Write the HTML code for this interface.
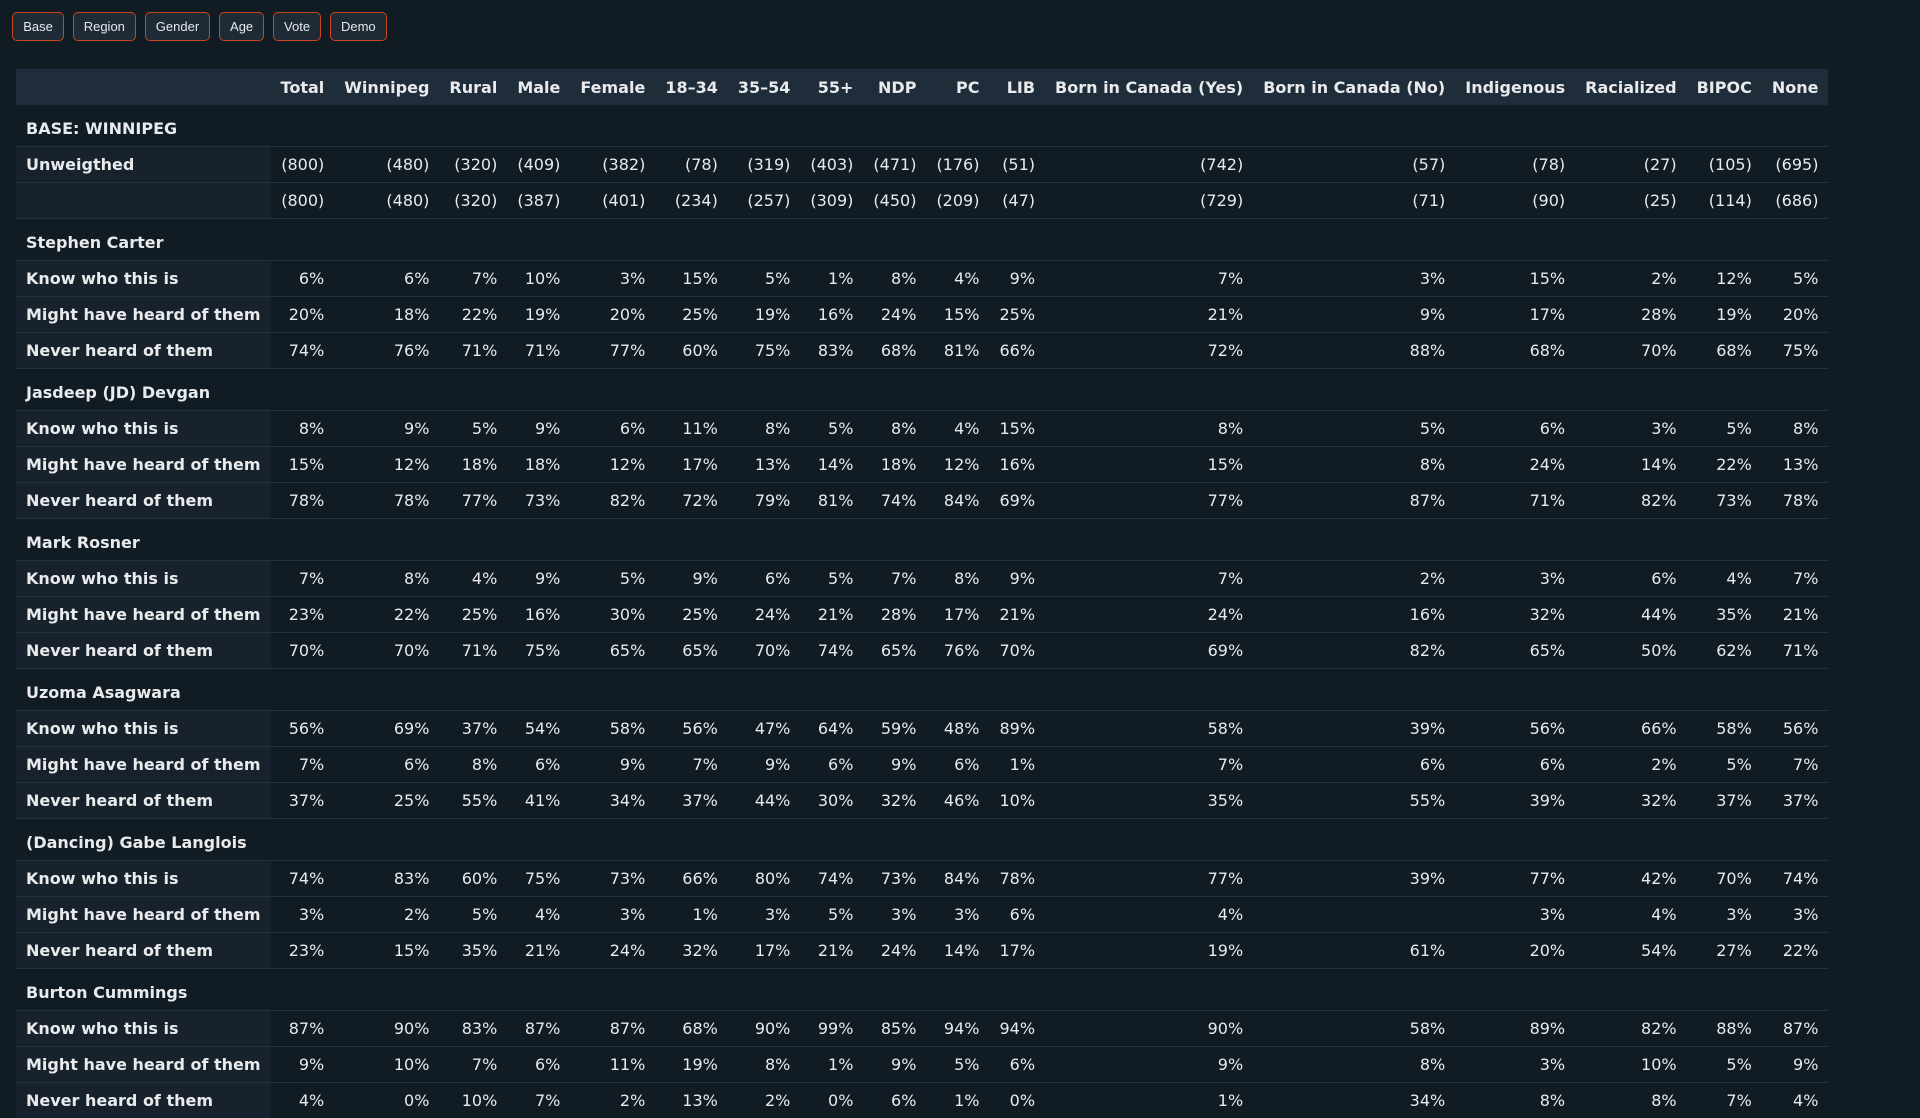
<!DOCTYPE html>
<html><head><meta charset="utf-8"><style>
html,body{margin:0;padding:0;background:#111b24;width:1920px;height:1080px;overflow:hidden}
.bar{position:absolute;left:12px;top:12px;display:flex;gap:8.5px}
.bar span{display:flex;align-items:center;box-sizing:border-box;height:29px;padding:0 10.2px;border:1px solid #c9461f;border-radius:5px;background:#1e2a36;color:#e6e9ec;font:13px/1 "Liberation Sans",sans-serif}
table{position:absolute;left:16px;top:69px;border-collapse:collapse;font-family:"DejaVu Sans",sans-serif;font-size:16px;color:#e8eaec}
th{background:#1f2c3a;font-weight:bold;text-align:right;padding:0 10px;height:36px;white-space:nowrap}
td{padding:0 10px;height:35px;white-space:nowrap;text-align:right;border-top:1px solid #26313c}
td.l{text-align:left;font-weight:bold;background:#18222c}
tr.g td{height:35px;text-align:left;font-weight:bold;background:#111b24;padding-top:6px}
tr.first td{border-top:none}
</style></head><body>
<div class="bar"><span>Base</span><span>Region</span><span>Gender</span><span>Age</span><span>Vote</span><span>Demo</span></div>
<table>
<tr><th></th><th>Total</th><th>Winnipeg</th><th>Rural</th><th>Male</th><th>Female</th><th>18–34</th><th>35–54</th><th>55+</th><th>NDP</th><th>PC</th><th>LIB</th><th>Born in Canada (Yes)</th><th>Born in Canada (No)</th><th>Indigenous</th><th>Racialized</th><th>BIPOC</th><th>None</th></tr>
<tr class="g first"><td colspan="18">BASE: WINNIPEG</td></tr>
<tr><td class="l">Unweigthed</td><td>(800)</td><td>(480)</td><td>(320)</td><td>(409)</td><td>(382)</td><td>(78)</td><td>(319)</td><td>(403)</td><td>(471)</td><td>(176)</td><td>(51)</td><td>(742)</td><td>(57)</td><td>(78)</td><td>(27)</td><td>(105)</td><td>(695)</td></tr>
<tr><td class="l"></td><td>(800)</td><td>(480)</td><td>(320)</td><td>(387)</td><td>(401)</td><td>(234)</td><td>(257)</td><td>(309)</td><td>(450)</td><td>(209)</td><td>(47)</td><td>(729)</td><td>(71)</td><td>(90)</td><td>(25)</td><td>(114)</td><td>(686)</td></tr>
<tr class="g"><td colspan="18">Stephen Carter</td></tr>
<tr><td class="l">Know who this is</td><td>6%</td><td>6%</td><td>7%</td><td>10%</td><td>3%</td><td>15%</td><td>5%</td><td>1%</td><td>8%</td><td>4%</td><td>9%</td><td>7%</td><td>3%</td><td>15%</td><td>2%</td><td>12%</td><td>5%</td></tr>
<tr><td class="l">Might have heard of them</td><td>20%</td><td>18%</td><td>22%</td><td>19%</td><td>20%</td><td>25%</td><td>19%</td><td>16%</td><td>24%</td><td>15%</td><td>25%</td><td>21%</td><td>9%</td><td>17%</td><td>28%</td><td>19%</td><td>20%</td></tr>
<tr><td class="l">Never heard of them</td><td>74%</td><td>76%</td><td>71%</td><td>71%</td><td>77%</td><td>60%</td><td>75%</td><td>83%</td><td>68%</td><td>81%</td><td>66%</td><td>72%</td><td>88%</td><td>68%</td><td>70%</td><td>68%</td><td>75%</td></tr>
<tr class="g"><td colspan="18">Jasdeep (JD) Devgan</td></tr>
<tr><td class="l">Know who this is</td><td>8%</td><td>9%</td><td>5%</td><td>9%</td><td>6%</td><td>11%</td><td>8%</td><td>5%</td><td>8%</td><td>4%</td><td>15%</td><td>8%</td><td>5%</td><td>6%</td><td>3%</td><td>5%</td><td>8%</td></tr>
<tr><td class="l">Might have heard of them</td><td>15%</td><td>12%</td><td>18%</td><td>18%</td><td>12%</td><td>17%</td><td>13%</td><td>14%</td><td>18%</td><td>12%</td><td>16%</td><td>15%</td><td>8%</td><td>24%</td><td>14%</td><td>22%</td><td>13%</td></tr>
<tr><td class="l">Never heard of them</td><td>78%</td><td>78%</td><td>77%</td><td>73%</td><td>82%</td><td>72%</td><td>79%</td><td>81%</td><td>74%</td><td>84%</td><td>69%</td><td>77%</td><td>87%</td><td>71%</td><td>82%</td><td>73%</td><td>78%</td></tr>
<tr class="g"><td colspan="18">Mark Rosner</td></tr>
<tr><td class="l">Know who this is</td><td>7%</td><td>8%</td><td>4%</td><td>9%</td><td>5%</td><td>9%</td><td>6%</td><td>5%</td><td>7%</td><td>8%</td><td>9%</td><td>7%</td><td>2%</td><td>3%</td><td>6%</td><td>4%</td><td>7%</td></tr>
<tr><td class="l">Might have heard of them</td><td>23%</td><td>22%</td><td>25%</td><td>16%</td><td>30%</td><td>25%</td><td>24%</td><td>21%</td><td>28%</td><td>17%</td><td>21%</td><td>24%</td><td>16%</td><td>32%</td><td>44%</td><td>35%</td><td>21%</td></tr>
<tr><td class="l">Never heard of them</td><td>70%</td><td>70%</td><td>71%</td><td>75%</td><td>65%</td><td>65%</td><td>70%</td><td>74%</td><td>65%</td><td>76%</td><td>70%</td><td>69%</td><td>82%</td><td>65%</td><td>50%</td><td>62%</td><td>71%</td></tr>
<tr class="g"><td colspan="18">Uzoma Asagwara</td></tr>
<tr><td class="l">Know who this is</td><td>56%</td><td>69%</td><td>37%</td><td>54%</td><td>58%</td><td>56%</td><td>47%</td><td>64%</td><td>59%</td><td>48%</td><td>89%</td><td>58%</td><td>39%</td><td>56%</td><td>66%</td><td>58%</td><td>56%</td></tr>
<tr><td class="l">Might have heard of them</td><td>7%</td><td>6%</td><td>8%</td><td>6%</td><td>9%</td><td>7%</td><td>9%</td><td>6%</td><td>9%</td><td>6%</td><td>1%</td><td>7%</td><td>6%</td><td>6%</td><td>2%</td><td>5%</td><td>7%</td></tr>
<tr><td class="l">Never heard of them</td><td>37%</td><td>25%</td><td>55%</td><td>41%</td><td>34%</td><td>37%</td><td>44%</td><td>30%</td><td>32%</td><td>46%</td><td>10%</td><td>35%</td><td>55%</td><td>39%</td><td>32%</td><td>37%</td><td>37%</td></tr>
<tr class="g"><td colspan="18">(Dancing) Gabe Langlois</td></tr>
<tr><td class="l">Know who this is</td><td>74%</td><td>83%</td><td>60%</td><td>75%</td><td>73%</td><td>66%</td><td>80%</td><td>74%</td><td>73%</td><td>84%</td><td>78%</td><td>77%</td><td>39%</td><td>77%</td><td>42%</td><td>70%</td><td>74%</td></tr>
<tr><td class="l">Might have heard of them</td><td>3%</td><td>2%</td><td>5%</td><td>4%</td><td>3%</td><td>1%</td><td>3%</td><td>5%</td><td>3%</td><td>3%</td><td>6%</td><td>4%</td><td></td><td>3%</td><td>4%</td><td>3%</td><td>3%</td></tr>
<tr><td class="l">Never heard of them</td><td>23%</td><td>15%</td><td>35%</td><td>21%</td><td>24%</td><td>32%</td><td>17%</td><td>21%</td><td>24%</td><td>14%</td><td>17%</td><td>19%</td><td>61%</td><td>20%</td><td>54%</td><td>27%</td><td>22%</td></tr>
<tr class="g"><td colspan="18">Burton Cummings</td></tr>
<tr><td class="l">Know who this is</td><td>87%</td><td>90%</td><td>83%</td><td>87%</td><td>87%</td><td>68%</td><td>90%</td><td>99%</td><td>85%</td><td>94%</td><td>94%</td><td>90%</td><td>58%</td><td>89%</td><td>82%</td><td>88%</td><td>87%</td></tr>
<tr><td class="l">Might have heard of them</td><td>9%</td><td>10%</td><td>7%</td><td>6%</td><td>11%</td><td>19%</td><td>8%</td><td>1%</td><td>9%</td><td>5%</td><td>6%</td><td>9%</td><td>8%</td><td>3%</td><td>10%</td><td>5%</td><td>9%</td></tr>
<tr><td class="l">Never heard of them</td><td>4%</td><td>0%</td><td>10%</td><td>7%</td><td>2%</td><td>13%</td><td>2%</td><td>0%</td><td>6%</td><td>1%</td><td>0%</td><td>1%</td><td>34%</td><td>8%</td><td>8%</td><td>7%</td><td>4%</td></tr>
</table>
</body></html>
